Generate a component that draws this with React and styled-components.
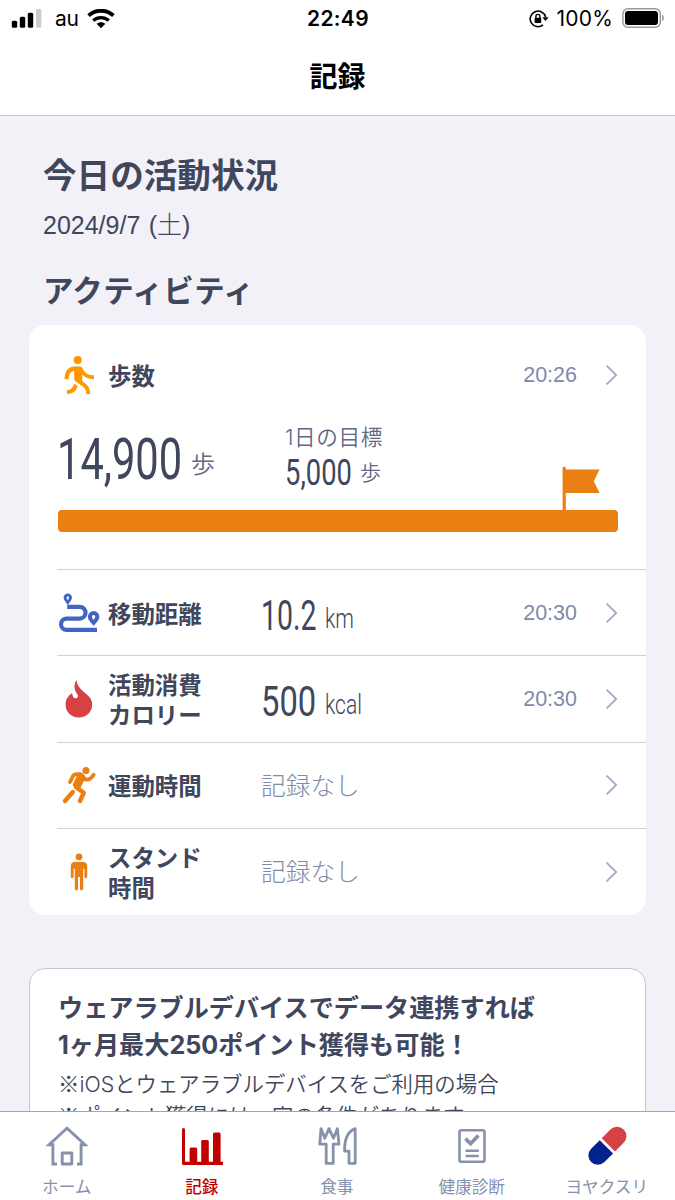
import React from 'react'
import styled, { createGlobalStyle } from 'styled-components'

const TEXT = '#40465c'
const SUB = '#7f8aa8'
const ORANGE = '#ea7f12'
const JP = `'Noto Sans CJK JP', sans-serif`

const GlobalStyle = createGlobalStyle`
* {
  box-sizing: border-box;
}
body {
  margin: 0;
  background: #f2f1f8;
}
p, h1, h2, h3 {
  margin: 0;
}
svg {
  display: block;
  flex: none;
}
`

const Screen = styled.div`
  width: 675px;
  height: 1200px;
  display: flex;
  flex-direction: column;
  overflow: hidden;
  background: #f2f1f8;
  color: ${TEXT};
  font-family: ${JP};
  white-space: nowrap;
`

const Header = styled.header`
  flex: none;
  height: 116px;
  background: #fff;
  border-bottom: 1px solid #c9c8d1;
  color: #000;
`

const StatusBar = styled.div`
  height: 37px;
  display: grid;
  grid-template-columns: 1fr auto 1fr;
  align-items: center;
  padding: 0 10px 0 11px;
  font-family: Inter, sans-serif;
  font-size: 21px;
  line-height: 37px;
`

const StatusSide = styled.div`
  display: flex;
  align-items: center;
  justify-content: ${({ $end }) => ($end ? 'flex-end' : 'flex-start')};
`

const Carrier = styled.span`
  margin: 0 8px 0 13px;
  letter-spacing: -0.2px;
`

const Clock = styled.span`
  font-weight: 600;
  font-size: 21px;
  letter-spacing: 0.3px;
`

const Percent = styled.span`
  margin: 0 9px 0 8px;
  letter-spacing: 0.2px;
`

const Title = styled.h1`
  margin-top: 18px;
  text-align: center;
  font-size: 28px;
  line-height: 40px;
  font-weight: 700;
`

const Content = styled.main`
  flex: 1;
  min-height: 0;
  overflow: hidden;
  padding: 33px 29px 0;
`

const Heading = styled.h2`
  padding-left: 14px;
  font-size: 33.6px;
  line-height: 50px;
  font-weight: 700;
`

const DateText = styled.p`
  padding-left: 14px;
  margin-top: 8px;
  font-family: 'Liberation Sans', ${JP};
  font-size: 25px;
  line-height: 36px;
  font-weight: 300;
  word-spacing: 1.5px;
`

const SubHeading = styled.h3`
  padding-left: 14px;
  margin-top: 24px;
  font-size: 30.5px;
  line-height: 44px;
  font-weight: 700;
  letter-spacing: 0.4px;
`

const Card = styled.section`
  width: 617px;
  margin-top: 14px;
  padding-left: 28px;
  height: 590px;
  background: #fff;
  border-radius: 17px;
`

const StepsPanel = styled.div`
  height: 244px;
  padding-top: 25px;
`

const Row = styled.div`
  display: flex;
  align-items: center;
  height: ${({ $top }) => ($top ? '50px' : '86.3px')};
  border-top: ${({ $top }) => ($top ? 'none' : '1.5px solid #d2d2d4')};
  padding-right: 28px;
`

const IconBox = styled.div`
  flex: none;
  width: 44px;
  display: flex;
  justify-content: center;
  margin-right: 7px;
`

const Label = styled.div`
  flex: none;
  width: 153px;
  font-size: 23.4px;
  line-height: 30px;
  font-weight: 700;
`

const Value = styled.div`
  flex: 1;
  display: flex;
  align-items: baseline;
`

const Empty = styled.span`
  margin-top: -3px;
  font-size: 24.7px;
  line-height: 36px;
  font-weight: 300;
  color: ${SUB};
`

const Time = styled.span`
  font-family: 'Liberation Sans', sans-serif;
  font-size: 21.5px;
  line-height: 30px;
  color: ${SUB};
  margin-right: 28px;
`

// digits squeezed to a condensed face, the box keeps the squeezed width
const Narrow = styled.span`
  flex: none;
  display: inline-block;
  width: ${({ $w }) => $w}px;
  font-family: Roboto, sans-serif;
  font-weight: ${({ $weight }) => $weight || 400};
  font-size: ${({ $size }) => $size}px;
  line-height: 1.2;
  margin-bottom: ${({ $raise }) => $raise || 0}px;
  transform: scaleX(${({ $squeeze }) => $squeeze});
  transform-origin: 0 50%;
`

const Figure = styled.div`
  display: flex;
  align-items: flex-end;
  padding-top: 5px;
`

const Unit = styled.span`
  font-size: ${({ $size }) => $size}px;
  line-height: 30px;
  font-weight: 350;
  color: #5f6885;
  margin-bottom: ${({ $raise }) => $raise}px;
`

const Totals = styled.div`
  display: flex;
  height: 110px;
`

const Today = styled.div`
  width: 228px;
  display: flex;
  align-items: flex-end;
  height: 94px;
`

const Goal = styled.div`
  padding-top: 21px;
`

const GoalLabel = styled.div`
  font-size: 21.6px;
  line-height: 30px;
  font-weight: 350;
  letter-spacing: 0.6px;
  color: #5f6885;
`

const GoalValue = styled.div`
  display: flex;
  align-items: flex-end;
  padding-top: 1px;
`

const Progress = styled.div`
  position: relative;
  width: 560px;
  height: 21.5px;
  margin-left: 0.5px;
  border-radius: 4px;
  background: ${ORANGE};
`

const FlagMark = styled.svg`
  position: absolute;
  left: 504px;
  bottom: 21.5px;
`

const Notice = styled.section`
  width: 617px;
  height: 240px;
  margin-top: 53px;
  padding: 19px 0 0 28px;
  background: #fff;
  border: 1px solid #c5c4d2;
  border-radius: 16px;
`

const NoticeTitle = styled.p`
  font-size: 25.15px;
  line-height: 36.5px;
  font-weight: 700;
`

const Latin = styled.span`
  font-family: Inter, sans-serif;
  line-height: 1;
`

const NoticeText = styled.p`
  margin-top: ${({ $first }) => ($first ? '6px' : '0')};
  font-size: 21.4px;
  line-height: 32px;
  font-weight: 350;
`

const TabBar = styled.nav`
  flex: none;
  height: 89px;
  display: grid;
  grid-template-columns: repeat(5, 135px);
  background: #fff;
  border-top: 1px solid #a5a5aa;
`

const Tab = styled.div`
  display: flex;
  flex-direction: column;
  align-items: center;
  padding: 10px 1.5px 0 0;
  color: ${({ $active }) => ($active ? '#c20000' : '#8791ab')};
  font-size: 16.6px;
  line-height: 24px;
  font-weight: ${({ $active }) => ($active ? 500 : 400)};
`

const TabLabel = styled.span`
  margin-top: 4px;
`

const Signal = () => (
  <svg width="31" height="20" viewBox="0 0 31 20">
    <rect x="0.8" y="11.8" width="5.4" height="7" rx="1.5" />
    <rect x="8.8" y="7.8" width="5.4" height="11" rx="1.5" />
    <rect x="16.8" y="3.8" width="5.4" height="15" rx="1.5" />
    <rect x="25" y="0" width="5.4" height="18.8" rx="1.5" fill="#ccc" />
  </svg>
)

const Wifi = () => (
  <svg width="28" height="20" viewBox="0 0 28 20" fill="none" stroke="#000">
    <path d="M1.6 6.6C8.5 0.1 19.5 0.1 26.4 6.6" strokeWidth="3.8" />
    <path d="M6.2 11.6C10.6 7.6 17.4 7.6 21.8 11.6" strokeWidth="3.4" />
    <path d="M14 19.2L9.6 14.8C12.2 12.6 15.8 12.6 18.4 14.8Z" fill="#000" stroke="none" />
  </svg>
)

const RotationLock = () => (
  <svg width="20" height="20" viewBox="0 0 20 20" fill="none" stroke="#000">
    <path d="M14 15.9A7.8 7.8 0 1 1 16.6 8" strokeWidth="1.6" />
    <path d="M13.4 8.2H19.6L16.5 12Z" fill="#000" stroke="none" />
    <rect x="5.6" y="8.8" width="6.6" height="5.2" rx="0.8" fill="#000" stroke="none" />
    <path d="M6.9 9V7.4a2 2 0 0 1 4 0V9" strokeWidth="1.4" />
  </svg>
)

const Battery = () => (
  <svg width="43" height="22" viewBox="0 0 43 22">
    <rect x="0.9" y="0.8" width="37.4" height="18.4" rx="5" fill="none" stroke="#999" strokeWidth="1.5" />
    <rect x="3" y="3" width="33" height="14" rx="3" />
    <path d="M40.2 6.8c2.2 1 2.2 5.4 0 6.4z" fill="#999" />
  </svg>
)

const WalkIcon = () => (
  <svg width="40" height="40" viewBox="0 0 40 40" fill="#ff9800">
    <circle cx="18.7" cy="5" r="4.1" />
    <path d="M15.2 11.6H20.6C23 11.6 23.6 13.2 24.6 15.2C26.4 18.2 29.4 20.2 35 20.2V24.2C29.6 24.2 26 22.6 23.2 19.6V26L27.4 29.6C30.2 32.2 31.2 34.6 31.2 39H27.2C27.2 35.6 26.6 34 24.4 32L16.8 26.4C15.6 25.4 15.2 24.6 15.2 23V15.8C11.4 16.6 9.6 19.4 9.6 24.2H5.6C5.6 16.6 9.2 11.6 15.2 11.6Z" />
    <path d="M15 28.4L18.6 31C17.2 36.2 13.6 39 8 39V35C11.8 35 14.2 32.6 15 28.4Z" />
  </svg>
)

const RouteIcon = () => (
  <svg width="42" height="40" viewBox="0 0 42 40" fill="none" stroke="#4065c5">
    <path d="M9.2 13.8H21.6a5.9 5.9 0 0 1 0 11.8H8.6a5.6 5.6 0 0 0 0 11.2H39" strokeWidth="4.2" />
    <path d="M9.8 9.4C8 7.4 7.1 6.2 7.1 4.7a2.7 2.7 0 0 1 5.4 0C12.5 6.2 11.6 7.4 9.8 9.4Z" strokeWidth="3" />
    <path d="M35.6 29.8C32.8 27 31.9 25.4 31.9 23.8a3.7 3.7 0 0 1 7.4 0C39.3 25.4 38.4 27 35.6 29.8Z" strokeWidth="4" />
  </svg>
)

const FlameIcon = () => (
  <svg width="40" height="40" viewBox="0 0 40 40" fill="#d64144">
    <path d="M17.4 1C18 7.4 22.8 11.4 27.6 15.2C31 18 33.2 21.2 33.2 25.6C33.2 33 27.6 38.6 19.8 38.6C12 38.6 6.6 33 6.6 25.6C6.6 20.6 8.8 17 13.2 14C13.2 17.4 14.6 19.4 16.8 19.4C18.6 19.2 19.4 17.6 18.6 15.8C14.8 10.6 14.6 6 17.4 1Z" />
  </svg>
)

const RunIcon = () => (
  <svg width="40" height="40" viewBox="0 0 40 40" fill="none" stroke={ORANGE} strokeLinecap="round" strokeLinejoin="round">
    <circle cx="27" cy="5.4" r="3.5" fill={ORANGE} stroke="none" />
    <path d="M11 17L14 11.2Q15 9.2 17.6 9.2H21Q23 9.4 24.2 12L25.8 14Q30 16.4 34.6 9.8" strokeWidth="3.8" />
    <path d="M19.8 10.8L24 13.6L19.8 22.6L15.6 20Z" fill={ORANGE} strokeWidth="3.6" />
    <path d="M17 22.2L24.8 27.8L21 36" strokeWidth="4.4" />
    <path d="M13.8 27L6 36" strokeWidth="4.4" />
  </svg>
)

const StandIcon = () => (
  <svg width="40" height="40" viewBox="0 0 40 40" fill={ORANGE}>
    <circle cx="20" cy="4.8" r="3.4" />
    <path d="M16 10H24Q28.2 10 28.2 14.4V24.8a1.4 1.4 0 0 1-2.8 0V16.8H24.2V36.8a1.6 1.6 0 0 1-3.2 0V25H19V36.8a1.6 1.6 0 0 1-3.2 0V16.8H14.6V24.8a1.4 1.4 0 0 1-2.8 0V14.4Q11.8 10 16 10Z" />
  </svg>
)

const Chevron = () => (
  <svg width="13" height="22" viewBox="0 0 13 22" fill="none" stroke="#a3abc4" strokeWidth="1.8">
    <path d="M1.6 1.6L11.2 11L1.6 20.4" />
  </svg>
)

const HomeIcon = () => (
  <svg width="48" height="48" viewBox="0 0 48 48" fill="none" stroke="currentColor" strokeWidth="2.9">
    <path d="M14 42H9.9V22.8H6L24 6.2L42 22.8H38.1V42H34" />
    <path d="M19.2 42V31H28.8V42Z" strokeLinejoin="round" />
  </svg>
)

const ChartIcon = () => (
  <svg width="48" height="48" viewBox="0 0 48 48" fill="currentColor">
    <path d="M4 7.5a1.5 1.5 0 0 1 3 0V39.8H45V43H5.5A1.5 1.5 0 0 1 4 41.5Z" />
    <rect x="11.6" y="25.6" width="7.6" height="16" rx="1.5" />
    <rect x="23.2" y="18" width="7.6" height="24" rx="1.5" />
    <rect x="35" y="10.5" width="7.6" height="31" rx="1.5" />
  </svg>
)

const MealIcon = () => (
  <svg width="48" height="48" viewBox="0 0 48 48" fill="none" stroke="currentColor" strokeWidth="2.8" strokeLinejoin="round">
    <path d="M8 6.6L11.8 16.2L16 6.6L20.4 16.2L24.4 6.6L26 22.2H20.2V41.4H13.2V22.2H6.8Z" />
    <path d="M42.2 6.6V41.4H36V29.2H31.6C31.4 18 34 9.6 42.2 6.6Z" />
  </svg>
)

const CheckupIcon = () => (
  <svg width="48" height="48" viewBox="0 0 48 48" fill="none" stroke="currentColor" strokeWidth="2.6">
    <rect x="11.5" y="8.2" width="25" height="31.6" rx="1.8" />
    <path d="M17.4 16.6L22.6 21.6L30.4 13.4" strokeWidth="3.6" />
    <path d="M17.6 28.8H30.8M17.6 34H30.8" strokeWidth="2.4" />
  </svg>
)

const PillIcon = () => (
  <svg width="48" height="48" viewBox="0 0 48 48">
    <g transform="translate(24.4 23.8) rotate(-45)">
      <path d="M1.4 -9.4H13.6a9.4 9.4 0 0 1 0 18.8H1.4Z" fill="#d64144" />
      <path d="M-1.4 -9.4H-13.6a9.4 9.4 0 0 0 0 18.8H-1.4Z" fill="#00238f" />
    </g>
  </svg>
)

const rows = [
  { icon: <RouteIcon />, label: ['移動距離'], num: '10.2', squeeze: 0.67, unit: 'km', time: '20:30' },
  { icon: <FlameIcon />, label: ['活動消費', 'カロリー'], num: '500', squeeze: 0.77, unit: 'kcal', time: '20:30' },
  { icon: <RunIcon />, label: ['運動時間'] },
  { icon: <StandIcon />, label: ['スタンド', '時間'] },
]

const tabs = [
  { icon: <HomeIcon />, label: 'ホーム' },
  { icon: <ChartIcon />, label: '記録', active: true },
  { icon: <MealIcon />, label: '食事' },
  { icon: <CheckupIcon />, label: '健康診断' },
  { icon: <PillIcon />, label: 'ヨヤクスリ' },
]

const App = () => {
  return (
    <>
      <GlobalStyle />
      <Screen>
        <Header>
          <StatusBar>
            <StatusSide>
              <Signal />
              <Carrier>au</Carrier>
              <Wifi />
            </StatusSide>
            <Clock>22:49</Clock>
            <StatusSide $end>
              <RotationLock />
              <Percent>100%</Percent>
              <Battery />
            </StatusSide>
          </StatusBar>
          <Title>記録</Title>
        </Header>

        <Content>
          <Heading>今日の活動状況</Heading>
          <DateText>2024/9/7 (土)</DateText>
          <SubHeading>アクティビティ</SubHeading>

          <Card>
            <StepsPanel>
              <Row $top>
                <IconBox><WalkIcon /></IconBox>
                <Label>歩数</Label>
                <Value />
                <Time>20:26</Time>
                <Chevron />
              </Row>
              <Totals>
                <Today>
                  <Narrow $size={57} $w={134} $squeeze={0.73}>14,900</Narrow>
                  <Unit $size={24} $raise={16}>歩</Unit>
                </Today>
                <Goal>
                  <GoalLabel><Latin>1</Latin>日の目標</GoalLabel>
                  <GoalValue>
                    <Narrow $size={36} $w={75} $squeeze={0.76}>5,000</Narrow>
                    <Unit $size={21} $raise={9}>歩</Unit>
                  </GoalValue>
                </Goal>
              </Totals>
              <Progress>
                <FlagMark width="40" height="44" viewBox="0 0 40 44" fill={ORANGE}>
                  <path d="M0.6 2a1.6 1.6 0 0 1 3.2 0V3.6H37.6L31.8 15.3L37.6 27H3.8V44H0.6Z" />
                </FlagMark>
              </Progress>
            </StepsPanel>

            {rows.map((row) => (
              <Row key={row.label[0]}>
                <IconBox>{row.icon}</IconBox>
                <Label>
                  {row.label.map((line) => <div key={line}>{line}</div>)}
                </Label>
                <Value>
                  {row.num ? (
                    <Figure>
                      <Narrow $size={42.5} $w={64} $squeeze={row.squeeze}>{row.num}</Narrow>
                      <Narrow $size={28} $w={40} $raise={5} $squeeze={0.75} $weight={300}>{row.unit}</Narrow>
                    </Figure>
                  ) : (
                    <Empty>記録なし</Empty>
                  )}
                </Value>
                {row.time && <Time>{row.time}</Time>}
                <Chevron />
              </Row>
            ))}
          </Card>

          <Notice>
            <NoticeTitle>ウェアラブルデバイスでデータ連携すれば</NoticeTitle>
            <NoticeTitle><Latin>1</Latin>ヶ月最大<Latin>250</Latin>ポイント獲得も可能！</NoticeTitle>
            <NoticeText $first>※<Latin>iOS</Latin>とウェアラブルデバイスをご利用の場合</NoticeText>
            <NoticeText>※ポイント獲得には一定の条件があります</NoticeText>
          </Notice>
        </Content>

        <TabBar>
          {tabs.map((tab) => (
            <Tab key={tab.label} $active={tab.active}>
              {tab.icon}
              <TabLabel>{tab.label}</TabLabel>
            </Tab>
          ))}
        </TabBar>
      </Screen>
    </>
  )
}

export default App
